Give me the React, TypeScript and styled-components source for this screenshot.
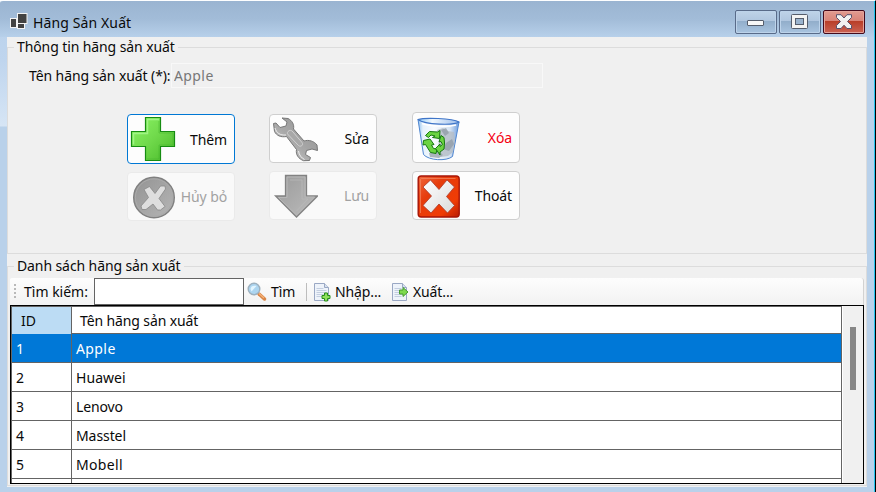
import React from 'react';
import styled, { createGlobalStyle, css } from 'styled-components';

const GlobalStyle = createGlobalStyle`
  * { box-sizing: border-box; }
  html, body { margin: 0; padding: 0; overflow: hidden; }
  body { font-family: "Noto Sans", "Open Sans", sans-serif; font-size: 14px; color: #0a0a0a; }
  button, input { font: inherit; color: inherit; letter-spacing: inherit; }
`;

const Window = styled.div`
  width: 876px;
  height: 492px;
  display: flex;
  flex-direction: column;
  padding: 0 7px 5px 7px;
  border-top: 1px solid #fdfeff;
  border-right: 1px solid #000;
  border-top-left-radius: 3px;
  box-shadow: inset -1px 0 #23c4ee;
  background:
    linear-gradient(#9ab4d1 0, #a2bcd8 18px, #b7d0ea 36px, transparent 36px),
    linear-gradient(90deg, transparent 20px, #b9d1ea 20px),
    linear-gradient(#b9d1ea 0, #bfd5ee 60px, #d6e5f5 125px, #b9d1ea 126px, #b9d1ea 100%);
  letter-spacing: -0.12px;
`;

const TitleBar = styled.header`
  height: 36px;
  flex: none;
  display: flex;
  align-items: flex-start;
  padding: 0 3px 0 3px;
`;

const AppIcon = styled.svg`
  margin: 12px 5px 0 0;
  display: block;
`;

const Title = styled.h1`
  flex: 1;
  margin: 12px 0 0;
  font-size: 14px;
  font-weight: 400;
  line-height: 20px;
  letter-spacing: 0.12px;
`;

const Captions = styled.div`
  display: flex;
  gap: 2px;
  padding-top: 9px;
`;

const CaptionButton = styled.button<{ $close?: boolean }>`
  width: 42px;
  height: 24px;
  padding: 0;
  display: flex;
  align-items: center;
  justify-content: center;
  border-radius: 2px;
  border: 1px solid ${p => (p.$close ? '#43091b' : '#596b89')};
  box-shadow: inset 0 0 0 1px ${p => (p.$close ? '#e4a49b' : '#bdd3ea')};
  background: ${p => p.$close
    ? 'linear-gradient(#e19b90 0, #d98377 10px, #b83d27 10px, #cb6354 100%)'
    : 'linear-gradient(#bfd3e8 0, #b0c6df 10px, #91adca 10px, #a9c4e0 100%)'};
`;

const Client = styled.main`
  flex: 1;
  min-height: 0;
  width: 860px;
  background: #f0f0f0;
  display: flex;
  flex-direction: column;
`;

const Group = styled.fieldset<{ $height: number; $top: number }>`
  flex: none;
  height: ${p => p.$height}px;
  margin: ${p => p.$top}px 0 0;
  padding: 0;
  min-width: 0;
  border: 1px solid #dcdcdc;
  display: flex;
  flex-direction: column;
`;

const Legend = styled.legend`
  height: 20px;
  margin-left: 6px;
  padding: 0 3px;
  line-height: 20px;
  letter-spacing: -0.1px;
`;

const Field = styled.div`
  display: flex;
  height: 25px;
  margin: 6px 0 0 21px;
`;

const FieldLabel = styled.label`
  width: 142px;
  line-height: 25px;
  white-space: nowrap;
  letter-spacing: -0.1px;
`;

const NameInput = styled.input`
  width: 372px;
  height: 25px;
  padding: 0 2px;
  border: 1px solid #f8f8f8;
  background: #f0f0f0;
  color: #777;
  letter-spacing: 0.4px;
`;

const Actions = styled.div`
  display: flex;
  margin: 24px 0 0 119px;
`;

const ActionColumn = styled.div<{ $top: number; $left: number }>`
  display: flex;
  flex-direction: column;
  gap: 8px;
  padding-top: ${p => p.$top}px;
  margin-left: ${p => p.$left}px;
`;

type Tone = 'normal' | 'focus' | 'disabled' | 'danger';

const toneStyles = {
  normal: css`border-color: #cfcfcf;`,
  focus: css`border-color: #0078d4;`,
  disabled: css`border-color: #eaeaea; background: #f9f9f9; color: #a2a2a2;`,
  danger: css`border-color: #cfcfcf; color: #f40012;`,
};

const ActionButton = styled.button<{ $tone: Tone; $height: number }>`
  width: 108px;
  height: ${p => p.$height}px;
  padding: 0 7px 0 2px;
  display: flex;
  align-items: center;
  justify-content: space-between;
  border: 1px solid;
  border-radius: 4px;
  background: #fdfdfd;
  white-space: nowrap;
  ${p => toneStyles[p.$tone]}
  svg { display: block; flex: none; }
`;

const ToolStrip = styled.div`
  height: 27px;
  margin: 2px 2px 0;
  flex: none;
  display: flex;
  align-items: center;
  padding-left: 4px;
  background: linear-gradient(#fdfdfd, #f2f2f2);
  border-right: 1px solid #d2d2d2;
  border-radius: 2px 3px 0 0;
`;

const Grip = styled.span`
  width: 2px;
  height: 16px;
  margin-right: 8px;
  background: repeating-linear-gradient(#b9b9b9 0 2px, transparent 2px 4px);
`;

const SearchLabel = styled.span`
  width: 70px;
  white-space: nowrap;
  letter-spacing: 0;
`;

const SearchInput = styled.input`
  width: 150px;
  height: 27px;
  border: 1px solid #646464;
  background: #fff;
  padding: 0 3px;
`;

const ToolButton = styled.button<{ $width: number; $inset?: number }>`
  width: ${p => p.$width}px;
  height: 24px;
  display: flex;
  align-items: center;
  padding: 0 0 0 ${p => p.$inset ?? 0}px;
  border: 0;
  background: none;
  white-space: nowrap;
  svg { flex: none; margin-right: 4px; }
`;

const Divider = styled.span`
  width: 1px;
  height: 18px;
  margin-right: 6px;
  background: #bdbdbd;
`;

const GridFrame = styled.div`
  width: 854px;
  height: 179px;
  margin-left: 2px;
  flex: none;
  display: flex;
  border: 1px solid #000;
  overflow: hidden;
`;

const Table = styled.div`
  width: 831px;
  flex: none;
  border: 1px solid #646464;
  border-bottom: 0;
  overflow: hidden;
  background: #fff;
`;

const Row = styled.div<{ $head?: boolean; $selected?: boolean }>`
  display: grid;
  grid-template-columns: 60px 1fr;
  height: ${p => (p.$head ? 27 : 29)}px;
  border-bottom: 1px solid #646464;
  background: ${p => (p.$selected ? '#0078d7' : '#fff')};
  color: ${p => (p.$selected ? '#fff' : '#0a0a0a')};
`;

const Cell = styled.div<{ $head?: boolean; $active?: boolean; $spacing?: number }>`
  padding-left: ${p => (p.$head ? 8 : 4)}px;
  line-height: ${p => (p.$head ? 27 : 29)}px;
  letter-spacing: ${p => p.$spacing ?? -0.12}px;
  background: ${p => (p.$active ? '#bcdcf4' : 'transparent')};
  &:first-child {
    border-right: 1px solid #646464;
    padding-left: ${p => (p.$head ? 9 : 4)}px;
  }
`;

const ScrollBar = styled.div`
  flex: 1;
  background: #f0f0f0;
  border-left: 1px solid #fff;
  padding: 21px 0 0 7px;
`;

const Thumb = styled.div`
  width: 6px;
  height: 63px;
  background: #868686;
`;

const PlusIcon = () => (
  <svg width="46" height="46" viewBox="0 0 46 46">
    <defs><linearGradient id="plus" x2="1" y2="1"><stop stopColor="#8cf565" /><stop offset=".5" stopColor="#70d94b" /><stop offset="1" stopColor="#48b929" /></linearGradient></defs>
    <path d="M15.500 1.500h15v14h14v15h-14v14h-15v-14h-14v-15h14z" fill="url(#plus)" stroke="#168c12" strokeWidth="1.200" />
    <path d="M29 3.500H17.500v14H3.500v11" fill="none" stroke="#a9f792" strokeWidth="1.500" opacity=".8" />
    <path d="M29 5v12h14v12H29v14H17" fill="none" stroke="#46b52b" opacity=".5" />
  </svg>
);

const CancelIcon = () => (
  <svg width="46" height="46" viewBox="0 0 46 46">
    <defs><linearGradient id="cancel" x2="1" y2="1"><stop stopColor="#929292" /><stop offset="1" stopColor="#b7b7b7" /></linearGradient></defs>
    <circle cx="24" cy="23.500" r="20.300" fill="url(#cancel)" stroke="#808080" strokeWidth="1.400" />
    <circle cx="24" cy="23.500" r="18.600" fill="none" stroke="#aaa" />
    <path d="M14 15.500l5.500-3 5.500 7 5.500-7.500h4.500l.5 3-6.500 9.500 6 8-4.500 3.500h-3l-4.500-6-7 5.500h-4l-1-3.500 7.500-8.500z" fill="#dedede" stroke="#888" strokeWidth=".8" />
  </svg>
);

const WrenchIcon = () => (
  <svg width="46" height="46" viewBox="0 0 46 46">
    <defs><linearGradient id="wrench" x1="1" y1="0" x2="0" y2="1"><stop stopColor="#8e8e8e" /><stop offset=".55" stopColor="#a9a9a9" /><stop offset="1" stopColor="#dedede" /></linearGradient></defs>
    <path d="M10 2l6 .5c4 2 6.500 6 5.500 10.500L32 25c4.500-1.500 10 0 13 4l.5 5.500-5.500-1.500-5.500 1.500-1 4 5 3-1 3-6 .2c-5-2-8-6-7-11.200L14.500 20.500c-6 1-10-1-12-5L1.500 7.500 4 7l4 4.500 6-1.500 1-4z" fill="url(#wrench)" stroke="#777" strokeWidth="1" strokeLinejoin="round" />
    <path d="M16 15.500c1.500-1.700 3.500-1.500 5 .5l9 10.500c2 2.500-1.500 5-3.500 3L16.500 19c-1.500-1.500-1.500-2-.5-3.500z" fill="#a8a8a8" stroke="#d0d0d0" strokeWidth="1" />
    <path d="M3 12c1.500 5 5 7.500 11 7M26.500 35c.5 4 3 7 6 8.500" fill="none" stroke="#eee" />
  </svg>
);

const ArrowIcon = () => (
  <svg width="46" height="46" viewBox="0 0 46 46">
    <defs><linearGradient id="arrow" x2="1" y2="1"><stop stopColor="#9a9a9a" /><stop offset="1" stopColor="#bcbcbc" /></linearGradient></defs>
    <path d="M13.500 2.500h21v20.500h11L24.500 44 3.500 23h10z" fill="url(#arrow)" stroke="#828282" strokeWidth="1.300" />
    <path d="M15 4h18v20h9.500L24.500 42 6.500 24.500H15z" fill="none" stroke="#b7b7b7" />
    <path d="M18 7h12v19h6L24.500 38" fill="none" stroke="#b9b9b9" strokeWidth=".8" />
  </svg>
);

const BinIcon = () => (
  <svg width="46" height="46" viewBox="0 0 46 46">
    <defs>
      <linearGradient id="bin"><stop stopColor="#8fc0ee" /><stop offset=".12" stopColor="#e6f2fc" /><stop offset=".4" stopColor="#f8fbfe" /><stop offset=".78" stopColor="#d6e3f2" /><stop offset="1" stopColor="#6f9fe0" /></linearGradient>
      <linearGradient id="lid"><stop stopColor="#8fc8f5" /><stop offset=".35" stopColor="#f0f8fe" /><stop offset="1" stopColor="#9cbdea" /></linearGradient>
    </defs>
    <path d="M3 4.500l5.500 35c5 6 23 7 29 2L44 7z" fill="url(#bin)" stroke="#4f86d0" />
    <path d="M22 15l6-2 5 3 6 1 1 8-2 12-5 4-7 1-4-7 2-9z" fill="#b4bdc6" opacity=".8" />
    <path d="M26 15l5-2 3 5-4 3zM31 28l6-4 2 5-5 7-6-2z" fill="#8d99a4" opacity=".7" />
    <path d="M14 38l8-4 6 6-4 3-9-1z" fill="#98a3ad" opacity=".8" />
    <path d="M3 4.500C9 2.500 37 3 44 7c-5 3.500-34 3-41-2.500z" fill="url(#lid)" stroke="#3f75c8" strokeWidth="1.200" strokeLinejoin="round" />
    <path d="M7 8.500c8 3 26 3.500 34 1.500" fill="none" stroke="#fff" strokeWidth="1.500" />
    <g fill="#6bd442" stroke="#15780f" strokeLinejoin="round">
      <path d="M10.500 20.500l4-4 8 .5 2.500-1.500-.5 8-7-1 2.500-1.500-4-1-2.500 2.500z" />
      <path d="M8.500 25.500l6.500-1.500 4 5.500-2.500.5 2 3.500 3.500.5-1 4.500-5.500-1-5-8-2.500.5z" />
      <path d="M20.500 33.500l4.500-4.500v2.500l2.500-2-1.500-3-2 .5 2-6.500 3 2 .500 5.500-.5 6-4 3v3z" />
    </g>
  </svg>
);

const ExitIcon = () => (
  <svg width="46" height="46" viewBox="0 0 46 46">
    <defs>
      <linearGradient id="exit" x2="1" y2="1"><stop stopColor="#f0673c" /><stop offset=".35" stopColor="#e63c0c" /><stop offset=".75" stopColor="#f03c05" /><stop offset="1" stopColor="#b81c05" /></linearGradient>
      <linearGradient id="exitx" x2="1" y2="1"><stop stopColor="#fff" /><stop offset="1" stopColor="#dadada" /></linearGradient>
    </defs>
    <rect x="3.200" y="3" width="41" height="41" rx="3" fill="url(#exit)" stroke="#a71507" strokeWidth="1.400" />
    <path d="M5.500 40V6.500q0-1 1-1h34" fill="none" stroke="#f38a65" opacity=".7" />
    <path d="M15.500 7l8.500 9.500L32 7l7.500 7-8 9.500 8 9-7 7.500-8.500-9-8 9-8-7.500 8.500-9.500-8.500-9z" fill="url(#exitx)" stroke="#a83a2b" strokeWidth=".8" />
  </svg>
);

const SearchIcon = () => (
  <svg width="20" height="20" viewBox="0 0 20 20">
    <path d="M12 12l5.500 5" stroke="#d98546" strokeWidth="3.500" strokeLinecap="round" />
    <path d="M12 11.500l5 4.500" stroke="#f5b37a" strokeWidth="1.300" />
    <circle cx="7" cy="7" r="5.800" fill="#acd5f0" stroke="#9db0be" strokeWidth="1.400" />
    <path d="M3.500 7c0-3 3-4 6-3L4.500 9.500z" fill="#e2f5ff" />
  </svg>
);

const DocIcon = ({ kind }: { kind: 'add' | 'export' }) => (
  <svg width="18" height="20" viewBox="0 0 18 20">
    <path d="M1.500 1.500h10l4 4v13h-14z" fill="#eef3fa" stroke="#9aa8c4" />
    <path d="M11.500 1.500v4h4" fill="#d7e1ef" stroke="#9aa8c4" />
    <path d="M3.500 6.500h7M3.500 8.500h10M3.500 10.500h10M3.500 12.500h10M3.500 14.500h7" stroke="#c3cee0" />
    {kind === 'add'
      ? <path d="M11.500 11h3v2.500H17v3h-2.500V19h-3v-2.500H9v-3h2.500z" fill="#8fe05c" stroke="#278e19" />
      : <path d="M8.500 8H12V5.500l5 4.500-5 4.500V12H8.500z" fill="#7ed94f" stroke="#469c31" />}
  </svg>
);

interface Action { label: string; tone: Tone; height: number; icon: React.ReactNode }

const actions: { top: number; left: number; items: Action[] }[] = [
  { top: 2, left: 0, items: [
    { label: 'Thêm', tone: 'focus', height: 50, icon: <PlusIcon /> },
    { label: 'Hủy bỏ', tone: 'disabled', height: 49, icon: <CancelIcon /> },
  ] },
  { top: 2, left: 34, items: [
    { label: 'Sửa', tone: 'normal', height: 49, icon: <WrenchIcon /> },
    { label: 'Lưu', tone: 'disabled', height: 49, icon: <ArrowIcon /> },
  ] },
  { top: 0, left: 35, items: [
    { label: 'Xóa', tone: 'danger', height: 51, icon: <BinIcon /> },
    { label: 'Thoát', tone: 'normal', height: 49, icon: <ExitIcon /> },
  ] },
];

const makers = [
  { id: '1', name: 'Apple', spacing: 0.4 },
  { id: '2', name: 'Huawei', spacing: 0.05 },
  { id: '3', name: 'Lenovo', spacing: -0.12 },
  { id: '4', name: 'Masstel', spacing: -0.08 },
  { id: '5', name: 'Mobell', spacing: 0.35 },
  { id: '', name: '', spacing: 0 },
];

export default function App() {
  return (
    <>
      <GlobalStyle />
      <Window>
        <TitleBar>
          <AppIcon width="18" height="17" viewBox="0 0 18 17">
            <g fill="#424242" stroke="#f3f3f3">
              <rect x=".5" y="5.500" width="6" height="9" />
              <rect x="7.500" y="10.500" width="7" height="5" />
              <rect x="7.500" y=".5" width="9.500" height="10" />
            </g>
          </AppIcon>
          <Title>Hãng Sản Xuất</Title>
          <Captions>
            <CaptionButton aria-label="Minimize">
              <svg width="18" height="8" viewBox="0 0 18 8"><rect x=".5" y="2.500" width="16" height="5" rx=".5" fill="#f7f7f7" stroke="#555d6c" /></svg>
            </CaptionButton>
            <CaptionButton aria-label="Maximize">
              <svg width="18" height="16" viewBox="0 0 18 16"><rect x=".5" y=".5" width="16" height="14" rx="1" fill="#f3f3f3" stroke="#555d6c" /><rect x="4.500" y="4.500" width="8" height="6" fill="#9ab3ce" stroke="#555d6c" /></svg>
            </CaptionButton>
            <CaptionButton $close aria-label="Close">
              <svg width="18" height="16" viewBox="0 0 18 16"><path d="M1.500.700h4.500L9 4l3-3.300h4.500v2.800L12.500 7.500l4 4v3H12L9 11.200l-3 3.300H1.500v-3l4-4-4-4z" fill="#f2f2f2" stroke="#58506a" strokeLinejoin="round" /></svg>
            </CaptionButton>
          </Captions>
        </TitleBar>
        <Client>
          <Group $height={217} $top={0}>
            <Legend>Thông tin hãng sản xuất</Legend>
            <Field>
              <FieldLabel>Tên hãng sản xuất (*):</FieldLabel>
              <NameInput defaultValue="Apple" disabled />
            </Field>
            <Actions>
              {actions.map((col, i) => (
                <ActionColumn key={i} $top={col.top} $left={col.left}>
                  {col.items.map(a => (
                    <ActionButton key={a.label} $tone={a.tone} $height={a.height}>{a.icon}<span>{a.label}</span></ActionButton>
                  ))}
                </ActionColumn>
              ))}
            </Actions>
          </Group>
          <Group $height={230} $top={2}>
            <Legend>Danh sách hãng sản xuất</Legend>
            <ToolStrip>
              <Grip />
              <SearchLabel>Tìm kiếm:</SearchLabel>
              <SearchInput />
              <ToolButton $width={62} $inset={3}><SearchIcon /><span>Tìm</span></ToolButton>
              <Divider />
              <ToolButton $width={78}><DocIcon kind="add" /><span>Nhập...</span></ToolButton>
              <ToolButton $width={70}><DocIcon kind="export" /><span>Xuất...</span></ToolButton>
            </ToolStrip>
            <GridFrame>
              <Table>
                <Row $head>
                  <Cell $head $active>ID</Cell>
                  <Cell $head>Tên hãng sản xuất</Cell>
                </Row>
                {makers.map((m, i) => (
                  <Row key={i} $selected={i === 0}>
                    <Cell>{m.id}</Cell>
                    <Cell $spacing={m.spacing}>{m.name}</Cell>
                  </Row>
                ))}
              </Table>
              <ScrollBar><Thumb /></ScrollBar>
            </GridFrame>
          </Group>
        </Client>
      </Window>
    </>
  );
}
